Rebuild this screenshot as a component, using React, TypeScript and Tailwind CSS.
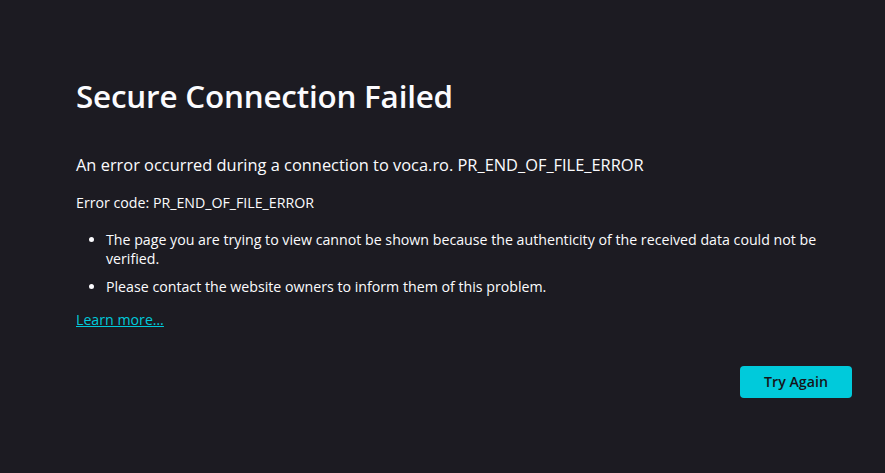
import React from "react";

const App = (): React.JSX.Element => (
  <div
    className="min-h-[473px] w-full bg-[#1c1b22] text-[#fbfbfe]"
    style={{ fontFamily: '"Open Sans", "Noto Sans", sans-serif' }}
  >
    <div className="ml-[76px] w-[776px] pt-[76px]">
      <h1 className="text-[31.4px] leading-[40px] font-semibold tracking-[-0.2px]">
        Secure Connection Failed
      </h1>
      <p className="mt-[37px] text-[16.4px] leading-[24px]">
        An error occurred during a connection to voca.ro. PR_END_OF_FILE_ERROR
      </p>
      <p className="mt-[16px] text-[14.2px] leading-[20px]">
        Error code: PR_END_OF_FILE_ERROR
      </p>
      <ul className="mt-[17px] list-disc pl-[30px] text-[14.2px] leading-[19px]">
        <li className="mb-[9px]">
          The page you are trying to view cannot be shown because the
          authenticity of the received data could not be verified.
        </li>
        <li>Please contact the website owners to inform them of this problem.</li>
      </ul>
      <a
        href="#"
        className="mt-[14px] inline-block text-[14.2px] leading-[20px] text-[#00cadb] underline"
      >
        Learn more…
      </a>
      <div className="mt-[35px] flex justify-end">
        <button className="h-[32px] w-[112px] rounded-[4px] bg-[#00cadb] text-[14.2px] font-semibold text-[#15141a]">
          Try Again
        </button>
      </div>
    </div>
  </div>
);

export default App;
